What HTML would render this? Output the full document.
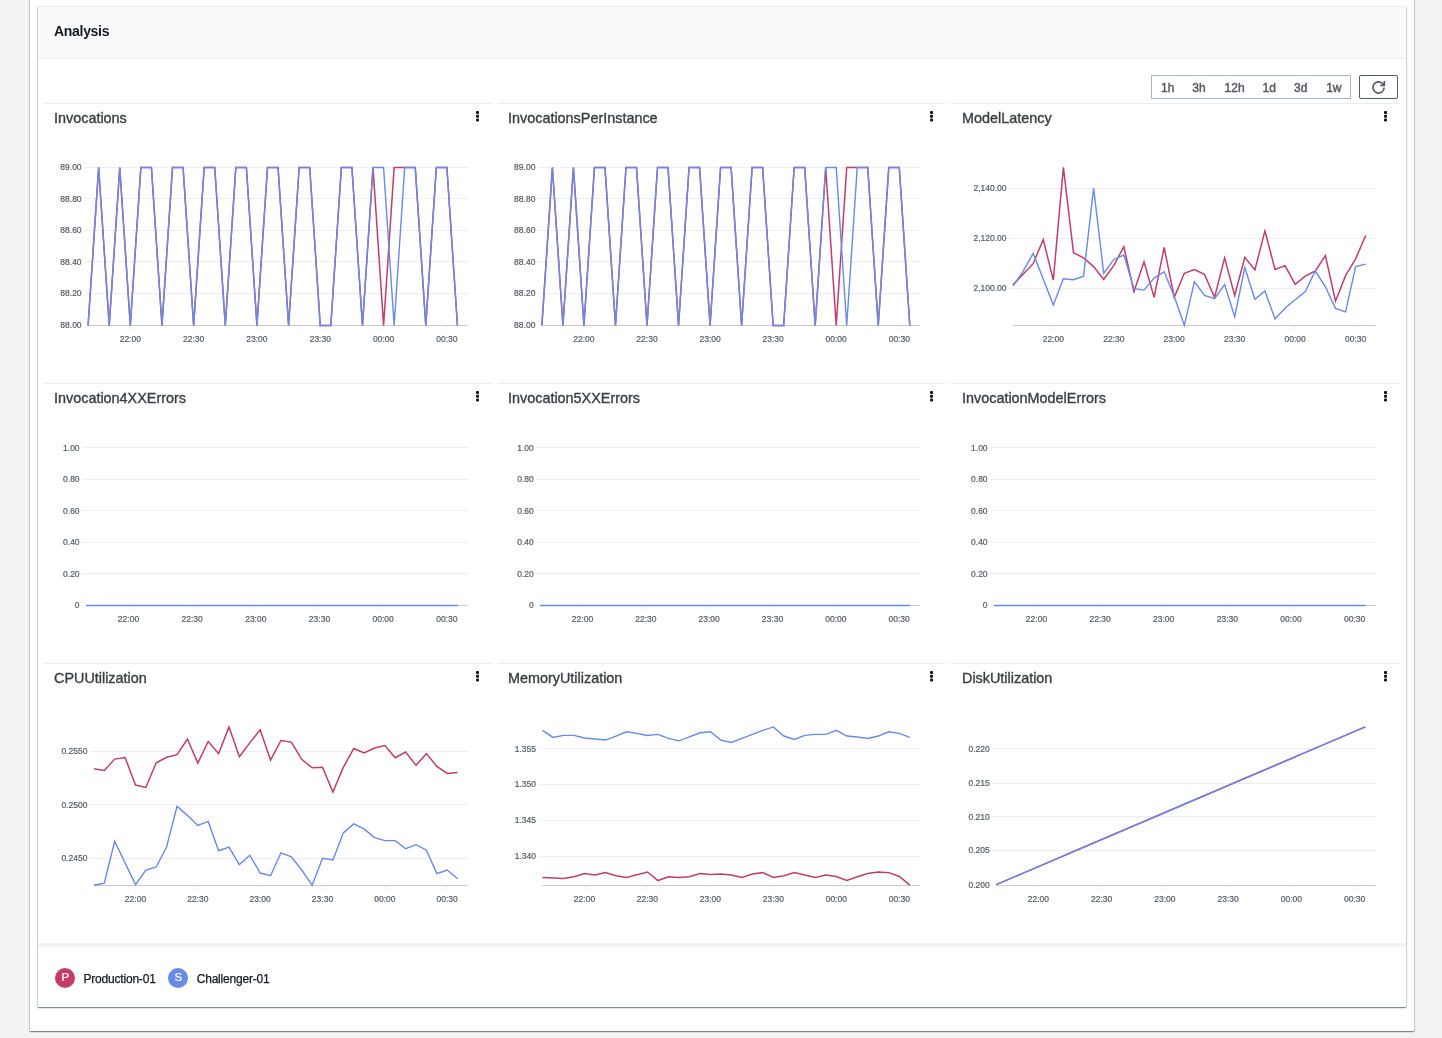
<!DOCTYPE html>
<html><head><meta charset="utf-8"><title>Analysis</title>
<style>
html,body{margin:0;padding:0;}
body{width:1442px;height:1038px;overflow:hidden;background:#f2f3f3;position:relative;font-family:"Liberation Sans", sans-serif;}
.a{position:absolute}
.ct{position:absolute;font-size:14.4px;line-height:16px;color:#393c40;-webkit-text-stroke:0.35px #393c40;white-space:nowrap}
.dots{position:absolute;width:4px;height:12px}
.dots i{display:block;width:3.2px;height:3.2px;border-radius:1px;background:#0f1115;margin-bottom:0.5px}
.seg{position:absolute;font-size:12px;font-weight:normal;-webkit-text-stroke:0.45px #545b64;color:#545b64;white-space:nowrap;line-height:12px}
</style></head><body><div style="position:absolute;left:0;top:0;width:1442px;height:1038px;will-change:transform">
<div class="a" style="left:30px;top:-10px;width:1384px;height:1041px;background:#fff;box-shadow:0 1px 1px 0 rgba(0,28,36,.3),1px 1px 1px 0 rgba(0,28,36,.15),-1px 1px 1px 0 rgba(0,28,36,.15)"></div>
<div class="a" style="left:38px;top:6px;width:1368px;height:1001px;box-sizing:border-box;border-top:1px solid #eaeded;background:#fff;box-shadow:0 1px 1px 0 rgba(0,28,36,.3),1px 1px 1px 0 rgba(0,28,36,.15),-1px 1px 1px 0 rgba(0,28,36,.15)"></div>
<div class="a" style="left:38px;top:7px;width:1368px;height:51px;background:#fafafa;border-bottom:1px solid #eaeded"></div>
<div class="a" style="left:54px;top:23px;font-size:14px;font-weight:bold;color:#16191f;line-height:16px;letter-spacing:-0.3px">Analysis</div>

<div class="a" style="left:1151px;top:75px;width:200px;height:24px;box-sizing:border-box;border:1px solid #aab7b8;background:#fff"></div>
<div class="seg" style="left:1147.7px;top:82px;width:40px;text-align:center">1h</div>
<div class="seg" style="left:1179.0px;top:82px;width:40px;text-align:center">3h</div>
<div class="seg" style="left:1214.6px;top:82px;width:40px;text-align:center">12h</div>
<div class="seg" style="left:1249.2px;top:82px;width:40px;text-align:center">1d</div>
<div class="seg" style="left:1280.7px;top:82px;width:40px;text-align:center">3d</div>
<div class="seg" style="left:1313.8px;top:82px;width:40px;text-align:center">1w</div>
<div class="a" style="left:1359px;top:75px;width:39px;height:24px;box-sizing:border-box;border:1px solid #545b64;border-radius:2px;background:#fff"></div>
<svg class="a" style="left:1366px;top:77px" width="26" height="20" viewBox="0 0 26 20"><path d="M18.1 10.5A5.6 5.6 0 1 1 16.5 6.5L18 8" fill="none" stroke="#545b64" stroke-width="1.7"/><path d="M18.3 4V8.4H14.2" fill="none" stroke="#545b64" stroke-width="1.7"/></svg>
<div class="a" style="left:44px;top:103px;width:448px;height:1px;background:#eaeded"></div>
<div class="ct" style="left:54px;top:110px">Invocations</div>
<svg class="a" style="left:475px;top:110px" width="5" height="16"><rect x="1" y="1" width="3" height="2.9" rx="1" fill="#0f1115"/><rect x="1" y="4.8" width="3" height="2.9" rx="1" fill="#0f1115"/><rect x="1" y="8.5" width="3" height="2.9" rx="1" fill="#0f1115"/></svg>
<svg class="a" style="left:0;top:0" width="1442" height="1038"><line x1="84.1" y1="167.5" x2="468.0" y2="167.5" stroke="#efefef" stroke-width="1"/><text x="81.6" y="170.0" text-anchor="end" font-size="8.5" fill="#545b64" stroke="#545b64" stroke-width="0.2" font-family="Liberation Sans">89.00</text><line x1="84.1" y1="198.5" x2="468.0" y2="198.5" stroke="#efefef" stroke-width="1"/><text x="81.6" y="201.6" text-anchor="end" font-size="8.5" fill="#545b64" stroke="#545b64" stroke-width="0.2" font-family="Liberation Sans">88.80</text><line x1="84.1" y1="230.5" x2="468.0" y2="230.5" stroke="#efefef" stroke-width="1"/><text x="81.6" y="233.2" text-anchor="end" font-size="8.5" fill="#545b64" stroke="#545b64" stroke-width="0.2" font-family="Liberation Sans">88.60</text><line x1="84.1" y1="261.5" x2="468.0" y2="261.5" stroke="#efefef" stroke-width="1"/><text x="81.6" y="264.8" text-anchor="end" font-size="8.5" fill="#545b64" stroke="#545b64" stroke-width="0.2" font-family="Liberation Sans">88.40</text><line x1="84.1" y1="293.5" x2="468.0" y2="293.5" stroke="#efefef" stroke-width="1"/><text x="81.6" y="296.4" text-anchor="end" font-size="8.5" fill="#545b64" stroke="#545b64" stroke-width="0.2" font-family="Liberation Sans">88.20</text><text x="81.6" y="328.0" text-anchor="end" font-size="8.5" fill="#545b64" stroke="#545b64" stroke-width="0.2" font-family="Liberation Sans">88.00</text><line x1="88.1" y1="325.5" x2="468.0" y2="325.5" stroke="#cbcbcb" stroke-width="1"/><line x1="130.3" y1="326" x2="130.3" y2="330" stroke="#efefef" stroke-width="1"/><text x="130.3" y="342" text-anchor="middle" font-size="8.5" fill="#545b64" stroke="#545b64" stroke-width="0.2" font-family="Liberation Sans">22:00</text><line x1="193.6" y1="326" x2="193.6" y2="330" stroke="#efefef" stroke-width="1"/><text x="193.6" y="342" text-anchor="middle" font-size="8.5" fill="#545b64" stroke="#545b64" stroke-width="0.2" font-family="Liberation Sans">22:30</text><line x1="256.9" y1="326" x2="256.9" y2="330" stroke="#efefef" stroke-width="1"/><text x="256.9" y="342" text-anchor="middle" font-size="8.5" fill="#545b64" stroke="#545b64" stroke-width="0.2" font-family="Liberation Sans">23:00</text><line x1="320.3" y1="326" x2="320.3" y2="330" stroke="#efefef" stroke-width="1"/><text x="320.3" y="342" text-anchor="middle" font-size="8.5" fill="#545b64" stroke="#545b64" stroke-width="0.2" font-family="Liberation Sans">23:30</text><line x1="383.6" y1="326" x2="383.6" y2="330" stroke="#efefef" stroke-width="1"/><text x="383.6" y="342" text-anchor="middle" font-size="8.5" fill="#545b64" stroke="#545b64" stroke-width="0.2" font-family="Liberation Sans">00:00</text><line x1="446.9" y1="326" x2="446.9" y2="330" stroke="#efefef" stroke-width="1"/><text x="446.9" y="342" text-anchor="middle" font-size="8.5" fill="#545b64" stroke="#545b64" stroke-width="0.2" font-family="Liberation Sans">00:30</text><path d="M88.10,325.50 L98.65,167.50 L109.21,325.50 L119.76,167.50 L130.31,325.50 L140.86,167.50 L151.42,167.50 L161.97,325.50 L172.52,167.50 L183.07,167.50 L193.63,325.50 L204.18,167.50 L214.73,167.50 L225.29,325.50 L235.84,167.50 L246.39,167.50 L256.94,325.50 L267.50,167.50 L278.05,167.50 L288.60,325.50 L299.16,167.50 L309.71,167.50 L320.26,325.50 L330.81,325.50 L341.37,167.50 L351.92,167.50 L362.47,325.50 L373.02,167.50 L383.58,325.50 L394.13,167.50 L404.68,167.50 L415.24,167.50 L425.79,325.50 L436.34,167.50 L446.89,167.50 L457.45,325.50" fill="none" stroke="#c33d69" stroke-width="1.5" stroke-linejoin="miter"/><path d="M88.10,325.50 L98.65,167.50 L109.21,325.50 L119.76,167.50 L130.31,325.50 L140.86,167.50 L151.42,167.50 L161.97,325.50 L172.52,167.50 L183.07,167.50 L193.63,325.50 L204.18,167.50 L214.73,167.50 L225.29,325.50 L235.84,167.50 L246.39,167.50 L256.94,325.50 L267.50,167.50 L278.05,167.50 L288.60,325.50 L299.16,167.50 L309.71,167.50 L320.26,325.50 L330.81,325.50 L341.37,167.50 L351.92,167.50 L362.47,325.50 L373.02,167.50 L383.58,167.50 L394.13,325.50 L404.68,167.50 L415.24,167.50 L425.79,325.50 L436.34,167.50 L446.89,167.50 L457.45,325.50" fill="none" stroke="#688ae8" stroke-width="1.4" stroke-linejoin="miter"/></svg>
<div class="a" style="left:498px;top:103px;width:447px;height:1px;background:#eaeded"></div>
<div class="ct" style="left:508px;top:110px">InvocationsPerInstance</div>
<svg class="a" style="left:929px;top:110px" width="5" height="16"><rect x="1" y="1" width="3" height="2.9" rx="1" fill="#0f1115"/><rect x="1" y="4.8" width="3" height="2.9" rx="1" fill="#0f1115"/><rect x="1" y="8.5" width="3" height="2.9" rx="1" fill="#0f1115"/></svg>
<svg class="a" style="left:0;top:0" width="1442" height="1038"><line x1="537.9" y1="167.5" x2="920.3" y2="167.5" stroke="#efefef" stroke-width="1"/><text x="535.4" y="170.0" text-anchor="end" font-size="8.5" fill="#545b64" stroke="#545b64" stroke-width="0.2" font-family="Liberation Sans">89.00</text><line x1="537.9" y1="198.5" x2="920.3" y2="198.5" stroke="#efefef" stroke-width="1"/><text x="535.4" y="201.6" text-anchor="end" font-size="8.5" fill="#545b64" stroke="#545b64" stroke-width="0.2" font-family="Liberation Sans">88.80</text><line x1="537.9" y1="230.5" x2="920.3" y2="230.5" stroke="#efefef" stroke-width="1"/><text x="535.4" y="233.2" text-anchor="end" font-size="8.5" fill="#545b64" stroke="#545b64" stroke-width="0.2" font-family="Liberation Sans">88.60</text><line x1="537.9" y1="261.5" x2="920.3" y2="261.5" stroke="#efefef" stroke-width="1"/><text x="535.4" y="264.8" text-anchor="end" font-size="8.5" fill="#545b64" stroke="#545b64" stroke-width="0.2" font-family="Liberation Sans">88.40</text><line x1="537.9" y1="293.5" x2="920.3" y2="293.5" stroke="#efefef" stroke-width="1"/><text x="535.4" y="296.4" text-anchor="end" font-size="8.5" fill="#545b64" stroke="#545b64" stroke-width="0.2" font-family="Liberation Sans">88.20</text><text x="535.4" y="328.0" text-anchor="end" font-size="8.5" fill="#545b64" stroke="#545b64" stroke-width="0.2" font-family="Liberation Sans">88.00</text><line x1="541.9" y1="325.5" x2="920.3" y2="325.5" stroke="#cbcbcb" stroke-width="1"/><line x1="583.9" y1="326" x2="583.9" y2="330" stroke="#efefef" stroke-width="1"/><text x="583.9" y="342" text-anchor="middle" font-size="8.5" fill="#545b64" stroke="#545b64" stroke-width="0.2" font-family="Liberation Sans">22:00</text><line x1="647.0" y1="326" x2="647.0" y2="330" stroke="#efefef" stroke-width="1"/><text x="647.0" y="342" text-anchor="middle" font-size="8.5" fill="#545b64" stroke="#545b64" stroke-width="0.2" font-family="Liberation Sans">22:30</text><line x1="710.1" y1="326" x2="710.1" y2="330" stroke="#efefef" stroke-width="1"/><text x="710.1" y="342" text-anchor="middle" font-size="8.5" fill="#545b64" stroke="#545b64" stroke-width="0.2" font-family="Liberation Sans">23:00</text><line x1="773.1" y1="326" x2="773.1" y2="330" stroke="#efefef" stroke-width="1"/><text x="773.1" y="342" text-anchor="middle" font-size="8.5" fill="#545b64" stroke="#545b64" stroke-width="0.2" font-family="Liberation Sans">23:30</text><line x1="836.2" y1="326" x2="836.2" y2="330" stroke="#efefef" stroke-width="1"/><text x="836.2" y="342" text-anchor="middle" font-size="8.5" fill="#545b64" stroke="#545b64" stroke-width="0.2" font-family="Liberation Sans">00:00</text><line x1="899.3" y1="326" x2="899.3" y2="330" stroke="#efefef" stroke-width="1"/><text x="899.3" y="342" text-anchor="middle" font-size="8.5" fill="#545b64" stroke="#545b64" stroke-width="0.2" font-family="Liberation Sans">00:30</text><path d="M541.90,325.50 L552.41,167.50 L562.92,325.50 L573.43,167.50 L583.94,325.50 L594.46,167.50 L604.97,167.50 L615.48,325.50 L625.99,167.50 L636.50,167.50 L647.01,325.50 L657.52,167.50 L668.03,167.50 L678.54,325.50 L689.06,167.50 L699.57,167.50 L710.08,325.50 L720.59,167.50 L731.10,167.50 L741.61,325.50 L752.12,167.50 L762.63,167.50 L773.14,325.50 L783.66,325.50 L794.17,167.50 L804.68,167.50 L815.19,325.50 L825.70,167.50 L836.21,325.50 L846.72,167.50 L857.23,167.50 L867.74,167.50 L878.26,325.50 L888.77,167.50 L899.28,167.50 L909.79,325.50" fill="none" stroke="#c33d69" stroke-width="1.5" stroke-linejoin="miter"/><path d="M541.90,325.50 L552.41,167.50 L562.92,325.50 L573.43,167.50 L583.94,325.50 L594.46,167.50 L604.97,167.50 L615.48,325.50 L625.99,167.50 L636.50,167.50 L647.01,325.50 L657.52,167.50 L668.03,167.50 L678.54,325.50 L689.06,167.50 L699.57,167.50 L710.08,325.50 L720.59,167.50 L731.10,167.50 L741.61,325.50 L752.12,167.50 L762.63,167.50 L773.14,325.50 L783.66,325.50 L794.17,167.50 L804.68,167.50 L815.19,325.50 L825.70,167.50 L836.21,167.50 L846.72,325.50 L857.23,167.50 L867.74,167.50 L878.26,325.50 L888.77,167.50 L899.28,167.50 L909.79,325.50" fill="none" stroke="#688ae8" stroke-width="1.4" stroke-linejoin="miter"/></svg>
<div class="a" style="left:952px;top:103px;width:448px;height:1px;background:#eaeded"></div>
<div class="ct" style="left:962px;top:110px">ModelLatency</div>
<svg class="a" style="left:1383px;top:110px" width="5" height="16"><rect x="1" y="1" width="3" height="2.9" rx="1" fill="#0f1115"/><rect x="1" y="4.8" width="3" height="2.9" rx="1" fill="#0f1115"/><rect x="1" y="8.5" width="3" height="2.9" rx="1" fill="#0f1115"/></svg>
<svg class="a" style="left:0;top:0" width="1442" height="1038"><line x1="1009.0" y1="188.5" x2="1375.8" y2="188.5" stroke="#efefef" stroke-width="1"/><text x="1006.5" y="191.1" text-anchor="end" font-size="8.5" fill="#545b64" stroke="#545b64" stroke-width="0.2" font-family="Liberation Sans">2,140.00</text><line x1="1009.0" y1="238.5" x2="1375.8" y2="238.5" stroke="#efefef" stroke-width="1"/><text x="1006.5" y="241.2" text-anchor="end" font-size="8.5" fill="#545b64" stroke="#545b64" stroke-width="0.2" font-family="Liberation Sans">2,120.00</text><line x1="1009.0" y1="288.5" x2="1375.8" y2="288.5" stroke="#efefef" stroke-width="1"/><text x="1006.5" y="291.2" text-anchor="end" font-size="8.5" fill="#545b64" stroke="#545b64" stroke-width="0.2" font-family="Liberation Sans">2,100.00</text><line x1="1013.0" y1="325.5" x2="1375.8" y2="325.5" stroke="#cbcbcb" stroke-width="1"/><line x1="1053.3" y1="326" x2="1053.3" y2="330" stroke="#efefef" stroke-width="1"/><text x="1053.3" y="342" text-anchor="middle" font-size="8.5" fill="#545b64" stroke="#545b64" stroke-width="0.2" font-family="Liberation Sans">22:00</text><line x1="1113.8" y1="326" x2="1113.8" y2="330" stroke="#efefef" stroke-width="1"/><text x="1113.8" y="342" text-anchor="middle" font-size="8.5" fill="#545b64" stroke="#545b64" stroke-width="0.2" font-family="Liberation Sans">22:30</text><line x1="1174.2" y1="326" x2="1174.2" y2="330" stroke="#efefef" stroke-width="1"/><text x="1174.2" y="342" text-anchor="middle" font-size="8.5" fill="#545b64" stroke="#545b64" stroke-width="0.2" font-family="Liberation Sans">23:00</text><line x1="1234.7" y1="326" x2="1234.7" y2="330" stroke="#efefef" stroke-width="1"/><text x="1234.7" y="342" text-anchor="middle" font-size="8.5" fill="#545b64" stroke="#545b64" stroke-width="0.2" font-family="Liberation Sans">23:30</text><line x1="1295.2" y1="326" x2="1295.2" y2="330" stroke="#efefef" stroke-width="1"/><text x="1295.2" y="342" text-anchor="middle" font-size="8.5" fill="#545b64" stroke="#545b64" stroke-width="0.2" font-family="Liberation Sans">00:00</text><line x1="1355.6" y1="326" x2="1355.6" y2="330" stroke="#efefef" stroke-width="1"/><text x="1355.6" y="342" text-anchor="middle" font-size="8.5" fill="#545b64" stroke="#545b64" stroke-width="0.2" font-family="Liberation Sans">00:30</text><path d="M1013.00,284.87 L1023.08,274.28 L1033.16,263.68 L1043.23,239.60 L1053.31,280.06 L1063.39,167.34 L1073.47,252.70 L1083.54,257.90 L1093.62,266.57 L1103.70,279.48 L1113.78,265.61 L1123.86,246.72 L1133.93,291.62 L1144.01,261.75 L1154.09,297.40 L1164.17,247.30 L1174.24,297.40 L1184.32,273.31 L1194.40,269.46 L1204.48,274.28 L1214.56,297.40 L1224.63,257.90 L1234.71,295.47 L1244.79,257.32 L1254.87,269.85 L1264.94,230.92 L1275.02,269.46 L1285.10,265.61 L1295.18,284.30 L1305.26,276.20 L1315.33,271.00 L1325.41,255.59 L1335.49,301.25 L1345.57,275.63 L1355.64,258.86 L1365.72,235.36" fill="none" stroke="#c33d69" stroke-width="1.5" stroke-linejoin="miter"/><path d="M1013.00,285.84 L1023.08,271.39 L1033.16,253.47 L1043.23,279.09 L1053.31,305.11 L1063.39,278.71 L1073.47,279.67 L1083.54,276.20 L1093.62,188.15 L1103.70,273.31 L1113.78,259.44 L1123.86,255.01 L1133.93,288.73 L1144.01,290.08 L1154.09,278.13 L1164.17,271.77 L1174.24,296.44 L1184.32,325.34 L1194.40,281.60 L1204.48,295.47 L1214.56,298.75 L1224.63,284.49 L1234.71,316.67 L1244.79,267.53 L1254.87,299.33 L1264.94,291.04 L1275.02,318.98 L1285.10,308.00 L1295.18,299.71 L1305.26,291.62 L1315.33,271.00 L1325.41,286.80 L1335.49,308.38 L1345.57,311.85 L1355.64,266.57 L1365.72,264.07" fill="none" stroke="#688ae8" stroke-width="1.4" stroke-linejoin="miter"/></svg>
<div class="a" style="left:44px;top:383px;width:448px;height:1px;background:#eaeded"></div>
<div class="ct" style="left:54px;top:390px">Invocation4XXErrors</div>
<svg class="a" style="left:475px;top:390px" width="5" height="16"><rect x="1" y="1" width="3" height="2.9" rx="1" fill="#0f1115"/><rect x="1" y="4.8" width="3" height="2.9" rx="1" fill="#0f1115"/><rect x="1" y="8.5" width="3" height="2.9" rx="1" fill="#0f1115"/></svg>
<svg class="a" style="left:0;top:0" width="1442" height="1038"><line x1="82.1" y1="447.5" x2="468.0" y2="447.5" stroke="#efefef" stroke-width="1"/><text x="79.6" y="450.5" text-anchor="end" font-size="8.5" fill="#545b64" stroke="#545b64" stroke-width="0.2" font-family="Liberation Sans">1.00</text><line x1="82.1" y1="479.5" x2="468.0" y2="479.5" stroke="#efefef" stroke-width="1"/><text x="79.6" y="482.0" text-anchor="end" font-size="8.5" fill="#545b64" stroke="#545b64" stroke-width="0.2" font-family="Liberation Sans">0.80</text><line x1="82.1" y1="510.5" x2="468.0" y2="510.5" stroke="#efefef" stroke-width="1"/><text x="79.6" y="513.5" text-anchor="end" font-size="8.5" fill="#545b64" stroke="#545b64" stroke-width="0.2" font-family="Liberation Sans">0.60</text><line x1="82.1" y1="542.5" x2="468.0" y2="542.5" stroke="#efefef" stroke-width="1"/><text x="79.6" y="545.0" text-anchor="end" font-size="8.5" fill="#545b64" stroke="#545b64" stroke-width="0.2" font-family="Liberation Sans">0.40</text><line x1="82.1" y1="573.5" x2="468.0" y2="573.5" stroke="#efefef" stroke-width="1"/><text x="79.6" y="576.5" text-anchor="end" font-size="8.5" fill="#545b64" stroke="#545b64" stroke-width="0.2" font-family="Liberation Sans">0.20</text><text x="79.6" y="608.0" text-anchor="end" font-size="8.5" fill="#545b64" stroke="#545b64" stroke-width="0.2" font-family="Liberation Sans">0</text><line x1="86.1" y1="605.5" x2="468.0" y2="605.5" stroke="#cbcbcb" stroke-width="1"/><line x1="128.5" y1="606" x2="128.5" y2="610" stroke="#efefef" stroke-width="1"/><text x="128.5" y="622" text-anchor="middle" font-size="8.5" fill="#545b64" stroke="#545b64" stroke-width="0.2" font-family="Liberation Sans">22:00</text><line x1="192.2" y1="606" x2="192.2" y2="610" stroke="#efefef" stroke-width="1"/><text x="192.2" y="622" text-anchor="middle" font-size="8.5" fill="#545b64" stroke="#545b64" stroke-width="0.2" font-family="Liberation Sans">22:30</text><line x1="255.8" y1="606" x2="255.8" y2="610" stroke="#efefef" stroke-width="1"/><text x="255.8" y="622" text-anchor="middle" font-size="8.5" fill="#545b64" stroke="#545b64" stroke-width="0.2" font-family="Liberation Sans">23:00</text><line x1="319.5" y1="606" x2="319.5" y2="610" stroke="#efefef" stroke-width="1"/><text x="319.5" y="622" text-anchor="middle" font-size="8.5" fill="#545b64" stroke="#545b64" stroke-width="0.2" font-family="Liberation Sans">23:30</text><line x1="383.1" y1="606" x2="383.1" y2="610" stroke="#efefef" stroke-width="1"/><text x="383.1" y="622" text-anchor="middle" font-size="8.5" fill="#545b64" stroke="#545b64" stroke-width="0.2" font-family="Liberation Sans">00:00</text><line x1="446.8" y1="606" x2="446.8" y2="610" stroke="#efefef" stroke-width="1"/><text x="446.8" y="622" text-anchor="middle" font-size="8.5" fill="#545b64" stroke="#545b64" stroke-width="0.2" font-family="Liberation Sans">00:30</text><path d="M86.10,605.50 L96.71,605.50 L107.32,605.50 L117.92,605.50 L128.53,605.50 L139.14,605.50 L149.75,605.50 L160.36,605.50 L170.97,605.50 L181.57,605.50 L192.18,605.50 L202.79,605.50 L213.40,605.50 L224.01,605.50 L234.62,605.50 L245.22,605.50 L255.83,605.50 L266.44,605.50 L277.05,605.50 L287.66,605.50 L298.27,605.50 L308.88,605.50 L319.48,605.50 L330.09,605.50 L340.70,605.50 L351.31,605.50 L361.92,605.50 L372.52,605.50 L383.13,605.50 L393.74,605.50 L404.35,605.50 L414.96,605.50 L425.57,605.50 L436.17,605.50 L446.78,605.50 L457.39,605.50" fill="none" stroke="#c33d69" stroke-width="1.2" stroke-linejoin="miter"/><path d="M86.10,605.50 L96.71,605.50 L107.32,605.50 L117.92,605.50 L128.53,605.50 L139.14,605.50 L149.75,605.50 L160.36,605.50 L170.97,605.50 L181.57,605.50 L192.18,605.50 L202.79,605.50 L213.40,605.50 L224.01,605.50 L234.62,605.50 L245.22,605.50 L255.83,605.50 L266.44,605.50 L277.05,605.50 L287.66,605.50 L298.27,605.50 L308.88,605.50 L319.48,605.50 L330.09,605.50 L340.70,605.50 L351.31,605.50 L361.92,605.50 L372.52,605.50 L383.13,605.50 L393.74,605.50 L404.35,605.50 L414.96,605.50 L425.57,605.50 L436.17,605.50 L446.78,605.50 L457.39,605.50" fill="none" stroke="#688ae8" stroke-width="1.4" stroke-linejoin="miter"/></svg>
<div class="a" style="left:498px;top:383px;width:447px;height:1px;background:#eaeded"></div>
<div class="ct" style="left:508px;top:390px">Invocation5XXErrors</div>
<svg class="a" style="left:929px;top:390px" width="5" height="16"><rect x="1" y="1" width="3" height="2.9" rx="1" fill="#0f1115"/><rect x="1" y="4.8" width="3" height="2.9" rx="1" fill="#0f1115"/><rect x="1" y="8.5" width="3" height="2.9" rx="1" fill="#0f1115"/></svg>
<svg class="a" style="left:0;top:0" width="1442" height="1038"><line x1="536.3" y1="447.5" x2="920.3" y2="447.5" stroke="#efefef" stroke-width="1"/><text x="533.8" y="450.5" text-anchor="end" font-size="8.5" fill="#545b64" stroke="#545b64" stroke-width="0.2" font-family="Liberation Sans">1.00</text><line x1="536.3" y1="479.5" x2="920.3" y2="479.5" stroke="#efefef" stroke-width="1"/><text x="533.8" y="482.0" text-anchor="end" font-size="8.5" fill="#545b64" stroke="#545b64" stroke-width="0.2" font-family="Liberation Sans">0.80</text><line x1="536.3" y1="510.5" x2="920.3" y2="510.5" stroke="#efefef" stroke-width="1"/><text x="533.8" y="513.5" text-anchor="end" font-size="8.5" fill="#545b64" stroke="#545b64" stroke-width="0.2" font-family="Liberation Sans">0.60</text><line x1="536.3" y1="542.5" x2="920.3" y2="542.5" stroke="#efefef" stroke-width="1"/><text x="533.8" y="545.0" text-anchor="end" font-size="8.5" fill="#545b64" stroke="#545b64" stroke-width="0.2" font-family="Liberation Sans">0.40</text><line x1="536.3" y1="573.5" x2="920.3" y2="573.5" stroke="#efefef" stroke-width="1"/><text x="533.8" y="576.5" text-anchor="end" font-size="8.5" fill="#545b64" stroke="#545b64" stroke-width="0.2" font-family="Liberation Sans">0.20</text><text x="533.8" y="608.0" text-anchor="end" font-size="8.5" fill="#545b64" stroke="#545b64" stroke-width="0.2" font-family="Liberation Sans">0</text><line x1="540.3" y1="605.5" x2="920.3" y2="605.5" stroke="#cbcbcb" stroke-width="1"/><line x1="582.5" y1="606" x2="582.5" y2="610" stroke="#efefef" stroke-width="1"/><text x="582.5" y="622" text-anchor="middle" font-size="8.5" fill="#545b64" stroke="#545b64" stroke-width="0.2" font-family="Liberation Sans">22:00</text><line x1="645.9" y1="606" x2="645.9" y2="610" stroke="#efefef" stroke-width="1"/><text x="645.9" y="622" text-anchor="middle" font-size="8.5" fill="#545b64" stroke="#545b64" stroke-width="0.2" font-family="Liberation Sans">22:30</text><line x1="709.2" y1="606" x2="709.2" y2="610" stroke="#efefef" stroke-width="1"/><text x="709.2" y="622" text-anchor="middle" font-size="8.5" fill="#545b64" stroke="#545b64" stroke-width="0.2" font-family="Liberation Sans">23:00</text><line x1="772.5" y1="606" x2="772.5" y2="610" stroke="#efefef" stroke-width="1"/><text x="772.5" y="622" text-anchor="middle" font-size="8.5" fill="#545b64" stroke="#545b64" stroke-width="0.2" font-family="Liberation Sans">23:30</text><line x1="835.9" y1="606" x2="835.9" y2="610" stroke="#efefef" stroke-width="1"/><text x="835.9" y="622" text-anchor="middle" font-size="8.5" fill="#545b64" stroke="#545b64" stroke-width="0.2" font-family="Liberation Sans">00:00</text><line x1="899.2" y1="606" x2="899.2" y2="610" stroke="#efefef" stroke-width="1"/><text x="899.2" y="622" text-anchor="middle" font-size="8.5" fill="#545b64" stroke="#545b64" stroke-width="0.2" font-family="Liberation Sans">00:30</text><path d="M540.30,605.50 L550.86,605.50 L561.41,605.50 L571.97,605.50 L582.52,605.50 L593.08,605.50 L603.63,605.50 L614.19,605.50 L624.74,605.50 L635.30,605.50 L645.86,605.50 L656.41,605.50 L666.97,605.50 L677.52,605.50 L688.08,605.50 L698.63,605.50 L709.19,605.50 L719.74,605.50 L730.30,605.50 L740.86,605.50 L751.41,605.50 L761.97,605.50 L772.52,605.50 L783.08,605.50 L793.63,605.50 L804.19,605.50 L814.74,605.50 L825.30,605.50 L835.86,605.50 L846.41,605.50 L856.97,605.50 L867.52,605.50 L878.08,605.50 L888.63,605.50 L899.19,605.50 L909.74,605.50" fill="none" stroke="#c33d69" stroke-width="1.2" stroke-linejoin="miter"/><path d="M540.30,605.50 L550.86,605.50 L561.41,605.50 L571.97,605.50 L582.52,605.50 L593.08,605.50 L603.63,605.50 L614.19,605.50 L624.74,605.50 L635.30,605.50 L645.86,605.50 L656.41,605.50 L666.97,605.50 L677.52,605.50 L688.08,605.50 L698.63,605.50 L709.19,605.50 L719.74,605.50 L730.30,605.50 L740.86,605.50 L751.41,605.50 L761.97,605.50 L772.52,605.50 L783.08,605.50 L793.63,605.50 L804.19,605.50 L814.74,605.50 L825.30,605.50 L835.86,605.50 L846.41,605.50 L856.97,605.50 L867.52,605.50 L878.08,605.50 L888.63,605.50 L899.19,605.50 L909.74,605.50" fill="none" stroke="#688ae8" stroke-width="1.4" stroke-linejoin="miter"/></svg>
<div class="a" style="left:952px;top:383px;width:448px;height:1px;background:#eaeded"></div>
<div class="ct" style="left:962px;top:390px">InvocationModelErrors</div>
<svg class="a" style="left:1383px;top:390px" width="5" height="16"><rect x="1" y="1" width="3" height="2.9" rx="1" fill="#0f1115"/><rect x="1" y="4.8" width="3" height="2.9" rx="1" fill="#0f1115"/><rect x="1" y="8.5" width="3" height="2.9" rx="1" fill="#0f1115"/></svg>
<svg class="a" style="left:0;top:0" width="1442" height="1038"><line x1="990.1" y1="447.5" x2="1375.8" y2="447.5" stroke="#efefef" stroke-width="1"/><text x="987.6" y="450.5" text-anchor="end" font-size="8.5" fill="#545b64" stroke="#545b64" stroke-width="0.2" font-family="Liberation Sans">1.00</text><line x1="990.1" y1="479.5" x2="1375.8" y2="479.5" stroke="#efefef" stroke-width="1"/><text x="987.6" y="482.0" text-anchor="end" font-size="8.5" fill="#545b64" stroke="#545b64" stroke-width="0.2" font-family="Liberation Sans">0.80</text><line x1="990.1" y1="510.5" x2="1375.8" y2="510.5" stroke="#efefef" stroke-width="1"/><text x="987.6" y="513.5" text-anchor="end" font-size="8.5" fill="#545b64" stroke="#545b64" stroke-width="0.2" font-family="Liberation Sans">0.60</text><line x1="990.1" y1="542.5" x2="1375.8" y2="542.5" stroke="#efefef" stroke-width="1"/><text x="987.6" y="545.0" text-anchor="end" font-size="8.5" fill="#545b64" stroke="#545b64" stroke-width="0.2" font-family="Liberation Sans">0.40</text><line x1="990.1" y1="573.5" x2="1375.8" y2="573.5" stroke="#efefef" stroke-width="1"/><text x="987.6" y="576.5" text-anchor="end" font-size="8.5" fill="#545b64" stroke="#545b64" stroke-width="0.2" font-family="Liberation Sans">0.20</text><text x="987.6" y="608.0" text-anchor="end" font-size="8.5" fill="#545b64" stroke="#545b64" stroke-width="0.2" font-family="Liberation Sans">0</text><line x1="994.1" y1="605.5" x2="1375.8" y2="605.5" stroke="#cbcbcb" stroke-width="1"/><line x1="1036.5" y1="606" x2="1036.5" y2="610" stroke="#efefef" stroke-width="1"/><text x="1036.5" y="622" text-anchor="middle" font-size="8.5" fill="#545b64" stroke="#545b64" stroke-width="0.2" font-family="Liberation Sans">22:00</text><line x1="1100.1" y1="606" x2="1100.1" y2="610" stroke="#efefef" stroke-width="1"/><text x="1100.1" y="622" text-anchor="middle" font-size="8.5" fill="#545b64" stroke="#545b64" stroke-width="0.2" font-family="Liberation Sans">22:30</text><line x1="1163.7" y1="606" x2="1163.7" y2="610" stroke="#efefef" stroke-width="1"/><text x="1163.7" y="622" text-anchor="middle" font-size="8.5" fill="#545b64" stroke="#545b64" stroke-width="0.2" font-family="Liberation Sans">23:00</text><line x1="1227.4" y1="606" x2="1227.4" y2="610" stroke="#efefef" stroke-width="1"/><text x="1227.4" y="622" text-anchor="middle" font-size="8.5" fill="#545b64" stroke="#545b64" stroke-width="0.2" font-family="Liberation Sans">23:30</text><line x1="1291.0" y1="606" x2="1291.0" y2="610" stroke="#efefef" stroke-width="1"/><text x="1291.0" y="622" text-anchor="middle" font-size="8.5" fill="#545b64" stroke="#545b64" stroke-width="0.2" font-family="Liberation Sans">00:00</text><line x1="1354.6" y1="606" x2="1354.6" y2="610" stroke="#efefef" stroke-width="1"/><text x="1354.6" y="622" text-anchor="middle" font-size="8.5" fill="#545b64" stroke="#545b64" stroke-width="0.2" font-family="Liberation Sans">00:30</text><path d="M994.10,605.50 L1004.70,605.50 L1015.31,605.50 L1025.91,605.50 L1036.51,605.50 L1047.11,605.50 L1057.72,605.50 L1068.32,605.50 L1078.92,605.50 L1089.53,605.50 L1100.13,605.50 L1110.73,605.50 L1121.33,605.50 L1131.94,605.50 L1142.54,605.50 L1153.14,605.50 L1163.74,605.50 L1174.35,605.50 L1184.95,605.50 L1195.55,605.50 L1206.16,605.50 L1216.76,605.50 L1227.36,605.50 L1237.96,605.50 L1248.57,605.50 L1259.17,605.50 L1269.77,605.50 L1280.38,605.50 L1290.98,605.50 L1301.58,605.50 L1312.18,605.50 L1322.79,605.50 L1333.39,605.50 L1343.99,605.50 L1354.59,605.50 L1365.20,605.50" fill="none" stroke="#c33d69" stroke-width="1.2" stroke-linejoin="miter"/><path d="M994.10,605.50 L1004.70,605.50 L1015.31,605.50 L1025.91,605.50 L1036.51,605.50 L1047.11,605.50 L1057.72,605.50 L1068.32,605.50 L1078.92,605.50 L1089.53,605.50 L1100.13,605.50 L1110.73,605.50 L1121.33,605.50 L1131.94,605.50 L1142.54,605.50 L1153.14,605.50 L1163.74,605.50 L1174.35,605.50 L1184.95,605.50 L1195.55,605.50 L1206.16,605.50 L1216.76,605.50 L1227.36,605.50 L1237.96,605.50 L1248.57,605.50 L1259.17,605.50 L1269.77,605.50 L1280.38,605.50 L1290.98,605.50 L1301.58,605.50 L1312.18,605.50 L1322.79,605.50 L1333.39,605.50 L1343.99,605.50 L1354.59,605.50 L1365.20,605.50" fill="none" stroke="#688ae8" stroke-width="1.4" stroke-linejoin="miter"/></svg>
<div class="a" style="left:44px;top:663px;width:448px;height:1px;background:#eaeded"></div>
<div class="ct" style="left:54px;top:670px">CPUUtilization</div>
<svg class="a" style="left:475px;top:670px" width="5" height="16"><rect x="1" y="1" width="3" height="2.9" rx="1" fill="#0f1115"/><rect x="1" y="4.8" width="3" height="2.9" rx="1" fill="#0f1115"/><rect x="1" y="8.5" width="3" height="2.9" rx="1" fill="#0f1115"/></svg>
<svg class="a" style="left:0;top:0" width="1442" height="1038"><line x1="89.9" y1="751.5" x2="468.0" y2="751.5" stroke="#efefef" stroke-width="1"/><text x="87.4" y="754.2" text-anchor="end" font-size="8.5" fill="#545b64" stroke="#545b64" stroke-width="0.2" font-family="Liberation Sans">0.2550</text><line x1="89.9" y1="804.5" x2="468.0" y2="804.5" stroke="#efefef" stroke-width="1"/><text x="87.4" y="807.6" text-anchor="end" font-size="8.5" fill="#545b64" stroke="#545b64" stroke-width="0.2" font-family="Liberation Sans">0.2500</text><line x1="89.9" y1="858.5" x2="468.0" y2="858.5" stroke="#efefef" stroke-width="1"/><text x="87.4" y="861.3" text-anchor="end" font-size="8.5" fill="#545b64" stroke="#545b64" stroke-width="0.2" font-family="Liberation Sans">0.2450</text><line x1="93.9" y1="885.5" x2="468.0" y2="885.5" stroke="#cbcbcb" stroke-width="1"/><line x1="135.5" y1="886" x2="135.5" y2="890" stroke="#efefef" stroke-width="1"/><text x="135.5" y="902" text-anchor="middle" font-size="8.5" fill="#545b64" stroke="#545b64" stroke-width="0.2" font-family="Liberation Sans">22:00</text><line x1="197.8" y1="886" x2="197.8" y2="890" stroke="#efefef" stroke-width="1"/><text x="197.8" y="902" text-anchor="middle" font-size="8.5" fill="#545b64" stroke="#545b64" stroke-width="0.2" font-family="Liberation Sans">22:30</text><line x1="260.2" y1="886" x2="260.2" y2="890" stroke="#efefef" stroke-width="1"/><text x="260.2" y="902" text-anchor="middle" font-size="8.5" fill="#545b64" stroke="#545b64" stroke-width="0.2" font-family="Liberation Sans">23:00</text><line x1="322.5" y1="886" x2="322.5" y2="890" stroke="#efefef" stroke-width="1"/><text x="322.5" y="902" text-anchor="middle" font-size="8.5" fill="#545b64" stroke="#545b64" stroke-width="0.2" font-family="Liberation Sans">23:30</text><line x1="384.9" y1="886" x2="384.9" y2="890" stroke="#efefef" stroke-width="1"/><text x="384.9" y="902" text-anchor="middle" font-size="8.5" fill="#545b64" stroke="#545b64" stroke-width="0.2" font-family="Liberation Sans">00:00</text><line x1="447.2" y1="886" x2="447.2" y2="890" stroke="#efefef" stroke-width="1"/><text x="447.2" y="902" text-anchor="middle" font-size="8.5" fill="#545b64" stroke="#545b64" stroke-width="0.2" font-family="Liberation Sans">00:30</text><path d="M93.90,768.81 L104.29,770.43 L114.68,759.10 L125.08,757.48 L135.47,785.00 L145.86,787.43 L156.25,762.74 L166.64,757.28 L177.03,754.64 L187.43,739.06 L197.82,763.15 L208.21,741.49 L218.60,753.63 L228.99,726.92 L239.38,756.67 L249.78,742.91 L260.17,729.75 L270.56,760.11 L280.95,740.48 L291.34,742.10 L301.73,759.30 L312.12,767.80 L322.52,767.19 L332.91,792.09 L343.30,767.40 L353.69,748.57 L364.08,753.03 L374.48,747.97 L384.87,745.54 L395.26,757.68 L405.65,752.01 L416.04,765.37 L426.43,753.63 L436.83,766.38 L447.22,773.47 L457.61,772.45" fill="none" stroke="#c33d69" stroke-width="1.5" stroke-linejoin="miter"/><path d="M93.90,885.19 L104.29,883.16 L114.68,841.27 L125.08,862.92 L135.47,884.58 L145.86,870.01 L156.25,866.97 L166.64,846.73 L177.03,806.25 L187.43,815.36 L197.82,825.48 L208.21,821.43 L218.60,850.78 L228.99,847.14 L239.38,864.54 L249.78,855.23 L260.17,873.04 L270.56,875.67 L280.95,852.80 L291.34,856.85 L301.73,870.01 L312.12,885.19 L322.52,858.27 L332.91,859.89 L343.30,832.97 L353.69,823.86 L364.08,828.92 L374.48,837.62 L384.87,840.66 L395.26,840.66 L405.65,848.76 L416.04,844.71 L426.43,850.17 L436.83,873.65 L447.22,870.01 L457.61,878.71" fill="none" stroke="#688ae8" stroke-width="1.4" stroke-linejoin="miter"/></svg>
<div class="a" style="left:498px;top:663px;width:447px;height:1px;background:#eaeded"></div>
<div class="ct" style="left:508px;top:670px">MemoryUtilization</div>
<svg class="a" style="left:929px;top:670px" width="5" height="16"><rect x="1" y="1" width="3" height="2.9" rx="1" fill="#0f1115"/><rect x="1" y="4.8" width="3" height="2.9" rx="1" fill="#0f1115"/><rect x="1" y="8.5" width="3" height="2.9" rx="1" fill="#0f1115"/></svg>
<svg class="a" style="left:0;top:0" width="1442" height="1038"><line x1="538.5" y1="748.5" x2="920.3" y2="748.5" stroke="#efefef" stroke-width="1"/><text x="536.0" y="751.6" text-anchor="end" font-size="8.5" fill="#545b64" stroke="#545b64" stroke-width="0.2" font-family="Liberation Sans">1.355</text><line x1="538.5" y1="784.5" x2="920.3" y2="784.5" stroke="#efefef" stroke-width="1"/><text x="536.0" y="787.4" text-anchor="end" font-size="8.5" fill="#545b64" stroke="#545b64" stroke-width="0.2" font-family="Liberation Sans">1.350</text><line x1="538.5" y1="820.5" x2="920.3" y2="820.5" stroke="#efefef" stroke-width="1"/><text x="536.0" y="823.4" text-anchor="end" font-size="8.5" fill="#545b64" stroke="#545b64" stroke-width="0.2" font-family="Liberation Sans">1.345</text><line x1="538.5" y1="856.5" x2="920.3" y2="856.5" stroke="#efefef" stroke-width="1"/><text x="536.0" y="859.2" text-anchor="end" font-size="8.5" fill="#545b64" stroke="#545b64" stroke-width="0.2" font-family="Liberation Sans">1.340</text><line x1="542.5" y1="885.5" x2="920.3" y2="885.5" stroke="#cbcbcb" stroke-width="1"/><line x1="584.5" y1="886" x2="584.5" y2="890" stroke="#efefef" stroke-width="1"/><text x="584.5" y="902" text-anchor="middle" font-size="8.5" fill="#545b64" stroke="#545b64" stroke-width="0.2" font-family="Liberation Sans">22:00</text><line x1="647.4" y1="886" x2="647.4" y2="890" stroke="#efefef" stroke-width="1"/><text x="647.4" y="902" text-anchor="middle" font-size="8.5" fill="#545b64" stroke="#545b64" stroke-width="0.2" font-family="Liberation Sans">22:30</text><line x1="710.4" y1="886" x2="710.4" y2="890" stroke="#efefef" stroke-width="1"/><text x="710.4" y="902" text-anchor="middle" font-size="8.5" fill="#545b64" stroke="#545b64" stroke-width="0.2" font-family="Liberation Sans">23:00</text><line x1="773.4" y1="886" x2="773.4" y2="890" stroke="#efefef" stroke-width="1"/><text x="773.4" y="902" text-anchor="middle" font-size="8.5" fill="#545b64" stroke="#545b64" stroke-width="0.2" font-family="Liberation Sans">23:30</text><line x1="836.3" y1="886" x2="836.3" y2="890" stroke="#efefef" stroke-width="1"/><text x="836.3" y="902" text-anchor="middle" font-size="8.5" fill="#545b64" stroke="#545b64" stroke-width="0.2" font-family="Liberation Sans">00:00</text><line x1="899.3" y1="886" x2="899.3" y2="890" stroke="#efefef" stroke-width="1"/><text x="899.3" y="902" text-anchor="middle" font-size="8.5" fill="#545b64" stroke="#545b64" stroke-width="0.2" font-family="Liberation Sans">00:30</text><path d="M542.50,877.49 L552.99,878.10 L563.49,878.51 L573.98,876.68 L584.48,873.45 L594.97,875.07 L605.47,872.64 L615.96,875.67 L626.46,877.49 L636.95,874.66 L647.44,872.03 L657.94,880.53 L668.43,876.68 L678.93,877.49 L689.42,876.68 L699.92,873.45 L710.41,874.46 L720.91,874.05 L731.40,875.07 L741.89,877.49 L752.39,874.05 L762.88,872.64 L773.38,877.49 L783.87,875.67 L794.37,872.43 L804.86,875.07 L815.36,877.49 L825.85,875.07 L836.34,876.48 L846.84,880.53 L857.33,876.68 L867.83,873.45 L878.32,872.03 L888.82,872.64 L899.31,876.48 L909.81,885.19" fill="none" stroke="#c33d69" stroke-width="1.5" stroke-linejoin="miter"/><path d="M542.50,730.36 L552.99,737.44 L563.49,735.42 L573.98,735.42 L584.48,738.05 L594.97,739.06 L605.47,740.07 L615.96,736.03 L626.46,731.77 L636.95,733.39 L647.44,735.42 L657.94,734.41 L668.43,738.45 L678.93,740.88 L689.42,736.83 L699.92,732.79 L710.41,731.77 L720.91,740.07 L731.40,742.50 L741.89,738.45 L752.39,734.41 L762.88,730.36 L773.38,726.92 L783.87,736.03 L794.37,739.47 L804.86,735.42 L815.36,734.41 L825.85,734.41 L836.34,730.36 L846.84,736.03 L857.33,737.04 L867.83,738.45 L878.32,736.03 L888.82,731.77 L899.31,733.39 L909.81,737.44" fill="none" stroke="#688ae8" stroke-width="1.4" stroke-linejoin="miter"/></svg>
<div class="a" style="left:952px;top:663px;width:448px;height:1px;background:#eaeded"></div>
<div class="ct" style="left:962px;top:670px">DiskUtilization</div>
<svg class="a" style="left:1383px;top:670px" width="5" height="16"><rect x="1" y="1" width="3" height="2.9" rx="1" fill="#0f1115"/><rect x="1" y="4.8" width="3" height="2.9" rx="1" fill="#0f1115"/><rect x="1" y="8.5" width="3" height="2.9" rx="1" fill="#0f1115"/></svg>
<svg class="a" style="left:0;top:0" width="1442" height="1038"><line x1="992.2" y1="748.5" x2="1375.8" y2="748.5" stroke="#efefef" stroke-width="1"/><text x="989.7" y="751.8" text-anchor="end" font-size="8.5" fill="#545b64" stroke="#545b64" stroke-width="0.2" font-family="Liberation Sans">0.220</text><line x1="992.2" y1="783.5" x2="1375.8" y2="783.5" stroke="#efefef" stroke-width="1"/><text x="989.7" y="786.0" text-anchor="end" font-size="8.5" fill="#545b64" stroke="#545b64" stroke-width="0.2" font-family="Liberation Sans">0.215</text><line x1="992.2" y1="816.5" x2="1375.8" y2="816.5" stroke="#efefef" stroke-width="1"/><text x="989.7" y="819.5" text-anchor="end" font-size="8.5" fill="#545b64" stroke="#545b64" stroke-width="0.2" font-family="Liberation Sans">0.210</text><line x1="992.2" y1="850.5" x2="1375.8" y2="850.5" stroke="#efefef" stroke-width="1"/><text x="989.7" y="853.1" text-anchor="end" font-size="8.5" fill="#545b64" stroke="#545b64" stroke-width="0.2" font-family="Liberation Sans">0.205</text><text x="989.7" y="888.0" text-anchor="end" font-size="8.5" fill="#545b64" stroke="#545b64" stroke-width="0.2" font-family="Liberation Sans">0.200</text><line x1="996.2" y1="885.5" x2="1375.8" y2="885.5" stroke="#cbcbcb" stroke-width="1"/><line x1="1038.4" y1="886" x2="1038.4" y2="890" stroke="#efefef" stroke-width="1"/><text x="1038.4" y="902" text-anchor="middle" font-size="8.5" fill="#545b64" stroke="#545b64" stroke-width="0.2" font-family="Liberation Sans">22:00</text><line x1="1101.6" y1="886" x2="1101.6" y2="890" stroke="#efefef" stroke-width="1"/><text x="1101.6" y="902" text-anchor="middle" font-size="8.5" fill="#545b64" stroke="#545b64" stroke-width="0.2" font-family="Liberation Sans">22:30</text><line x1="1164.9" y1="886" x2="1164.9" y2="890" stroke="#efefef" stroke-width="1"/><text x="1164.9" y="902" text-anchor="middle" font-size="8.5" fill="#545b64" stroke="#545b64" stroke-width="0.2" font-family="Liberation Sans">23:00</text><line x1="1228.2" y1="886" x2="1228.2" y2="890" stroke="#efefef" stroke-width="1"/><text x="1228.2" y="902" text-anchor="middle" font-size="8.5" fill="#545b64" stroke="#545b64" stroke-width="0.2" font-family="Liberation Sans">23:30</text><line x1="1291.4" y1="886" x2="1291.4" y2="890" stroke="#efefef" stroke-width="1"/><text x="1291.4" y="902" text-anchor="middle" font-size="8.5" fill="#545b64" stroke="#545b64" stroke-width="0.2" font-family="Liberation Sans">00:00</text><line x1="1354.7" y1="886" x2="1354.7" y2="890" stroke="#efefef" stroke-width="1"/><text x="1354.7" y="902" text-anchor="middle" font-size="8.5" fill="#545b64" stroke="#545b64" stroke-width="0.2" font-family="Liberation Sans">00:30</text><path d="M996.20,884.60 L1006.74,880.09 L1017.29,875.59 L1027.83,871.08 L1038.38,866.58 L1048.92,862.07 L1059.47,857.57 L1070.01,853.06 L1080.56,848.55 L1091.10,844.05 L1101.64,839.54 L1112.19,835.04 L1122.73,830.53 L1133.28,826.03 L1143.82,821.52 L1154.37,817.01 L1164.91,812.51 L1175.46,808.00 L1186.00,803.50 L1196.54,798.99 L1207.09,794.49 L1217.63,789.98 L1228.18,785.47 L1238.72,780.97 L1249.27,776.46 L1259.81,771.96 L1270.36,767.45 L1280.90,762.95 L1291.44,758.44 L1301.99,753.93 L1312.53,749.43 L1323.08,744.92 L1333.62,740.42 L1344.17,735.91 L1354.71,731.41 L1365.26,726.90" fill="none" stroke="#c33d69" stroke-width="1.5" stroke-linejoin="miter"/><path d="M996.20,884.60 L1006.74,880.09 L1017.29,875.59 L1027.83,871.08 L1038.38,866.58 L1048.92,862.07 L1059.47,857.57 L1070.01,853.06 L1080.56,848.55 L1091.10,844.05 L1101.64,839.54 L1112.19,835.04 L1122.73,830.53 L1133.28,826.03 L1143.82,821.52 L1154.37,817.01 L1164.91,812.51 L1175.46,808.00 L1186.00,803.50 L1196.54,798.99 L1207.09,794.49 L1217.63,789.98 L1228.18,785.47 L1238.72,780.97 L1249.27,776.46 L1259.81,771.96 L1270.36,767.45 L1280.90,762.95 L1291.44,758.44 L1301.99,753.93 L1312.53,749.43 L1323.08,744.92 L1333.62,740.42 L1344.17,735.91 L1354.71,731.41 L1365.26,726.90" fill="none" stroke="#688ae8" stroke-width="1.4" stroke-linejoin="miter"/></svg>
<div class="a" style="left:38px;top:943px;width:1368px;height:4px;background:#f2f3f3"></div>
<div class="a" style="left:55.4px;top:968px;width:20px;height:20px;border-radius:50%;background:#c33d69;color:#fff;font-size:11.5px;font-weight:normal;-webkit-text-stroke:0.2px #fff;line-height:18px;text-align:center">P</div>
<div class="a" style="left:83.5px;top:972px;font-size:12px;line-height:14px;color:#16191f;-webkit-text-stroke:0.25px #16191f;white-space:nowrap;letter-spacing:-0.2px">Production-01</div>
<div class="a" style="left:168.4px;top:968px;width:20px;height:20px;border-radius:50%;background:#688ae8;color:#fff;font-size:11.5px;font-weight:normal;-webkit-text-stroke:0.2px #fff;line-height:18px;text-align:center">S</div>
<div class="a" style="left:196.7px;top:972px;font-size:12px;line-height:14px;color:#16191f;-webkit-text-stroke:0.25px #16191f;white-space:nowrap;letter-spacing:-0.2px">Challenger-01</div>
</div></body></html>
